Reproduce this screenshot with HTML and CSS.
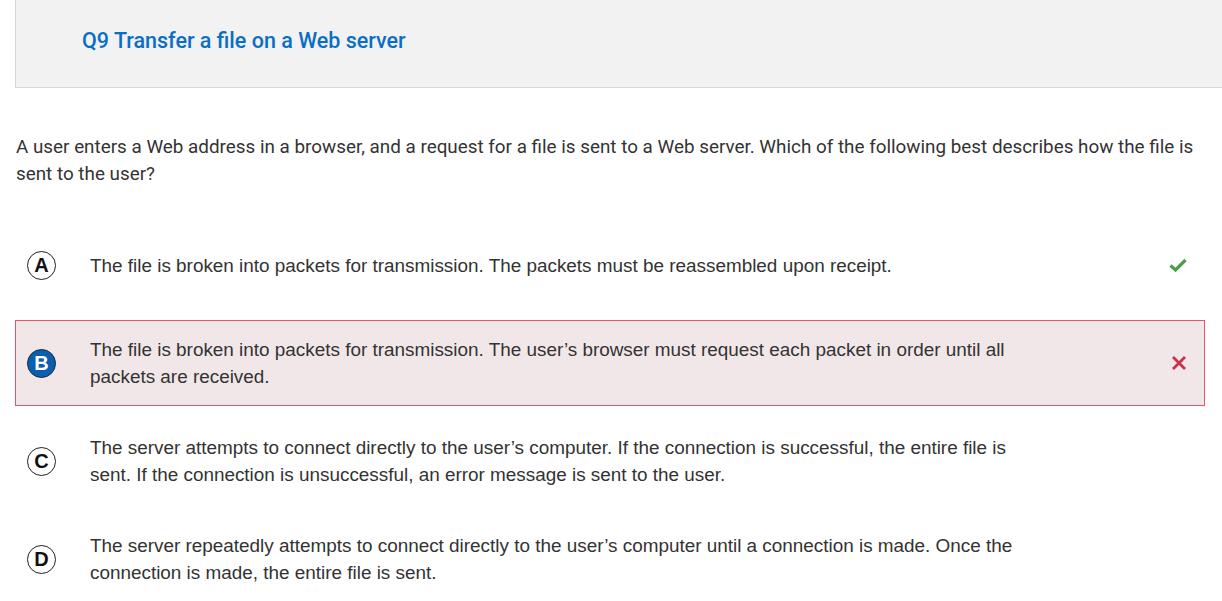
FILE: index.html
```html
<!DOCTYPE html>
<html>
<head>
<meta charset="utf-8">
<link rel="stylesheet" href="styles.css">
</head>
<body>
<div class="page">
  <div class="header">
    <h1 class="title">Q9 Transfer a file on a Web server</h1>
  </div>
  <p class="question">A user enters a Web address in a browser, and a request for a file is sent to a Web server. Which of the following best describes how the file is sent to the user?</p>
  <div class="options">
    <div class="option">
      <span class="badge">A</span>
      <span class="text">The file is broken into packets for transmission. The packets must be reassembled upon receipt.</span>
      <span class="mark">
        <svg width="18" height="14" viewBox="0 0 18 14"><path d="M1.5 7.5 L6.5 12 L16.5 2" fill="none" stroke="#46a046" stroke-width="3.2"/></svg>
      </span>
    </div>
    <div class="option wrong">
      <span class="badge selected">B</span>
      <span class="text">The file is broken into packets for transmission. The user’s browser must request each packet in order until all packets are received.</span>
      <span class="mark">
        <svg width="16" height="16" viewBox="0 0 16 16"><path d="M2 2 L14 14 M14 2 L2 14" fill="none" stroke="#c9304b" stroke-width="2.8"/></svg>
      </span>
    </div>
    <div class="option">
      <span class="badge">C</span>
      <span class="text">The server attempts to connect directly to the user’s computer. If the connection is successful, the entire file is sent. If the connection is unsuccessful, an error message is sent to the user.</span>
      <span class="mark"></span>
    </div>
    <div class="option">
      <span class="badge">D</span>
      <span class="text">The server repeatedly attempts to connect directly to the user’s computer until a connection is made. Once the connection is made, the entire file is sent.</span>
      <span class="mark"></span>
    </div>
  </div>
</div>
</body>
</html>
```

FILE: styles.css
```css
html, body {
  margin: 0;
  padding: 0;
  background: #ffffff;
  overflow: hidden;
}

.page {
  padding: 0 18px 0 15px;
}

.header {
  background: #f2f2f2;
  border-left: 1px solid #d6d6d6;
  border-bottom: 1px solid #d6d6d6;
  margin-right: -30px;
  height: 89px;
  margin-top: -1px;
  display: flex;
  align-items: center;
  padding-left: 66px;
  padding-bottom: 6px;
  box-sizing: border-box;
}

.title {
  margin: 0;
  font-family: Roboto, "Liberation Sans", sans-serif;
  font-weight: 500;
  font-size: 21.5px;
  color: #0b6ec5;
}

.question {
  margin: 46px 0 0 1px;
  font-family: Roboto, "Liberation Sans", sans-serif;
  font-size: 18.85px;
  line-height: 27px;
  color: #333333;
}

.options {
  margin-top: 34px;
  display: flex;
  flex-direction: column;
  gap: 12px;
}

.option {
  display: flex;
  align-items: center;
  min-height: 86px;
  box-sizing: border-box;
  border: 1px solid transparent;
  width: 1190px;
}

.option.wrong {
  background: #f2e7e8;
  border-color: #e6566b;
}

.badge {
  flex: none;
  width: 29px;
  height: 29px;
  box-sizing: border-box;
  border: 1.3px solid #222;
  border-radius: 50%;
  margin-left: 11px;
  margin-right: 34px;
  display: flex;
  align-items: center;
  justify-content: center;
  font-family: "Liberation Sans", Arial, sans-serif;
  font-weight: bold;
  font-size: 20px;
  color: #111;
  background: #fff;
}

.badge.selected {
  background: #0b5dad;
  border-color: #1b2a44;
  color: #fff;
}

.text {
  width: 924px;
  flex: none;
  font-family: "Liberation Sans", Arial, sans-serif;
  font-size: 18.9px;
  line-height: 27px;
  color: #333333;
}

.mark {
  flex: 1;
  display: flex;
  justify-content: flex-end;
  padding-right: 17px;
}

.mark svg {
  display: block;
}
```
